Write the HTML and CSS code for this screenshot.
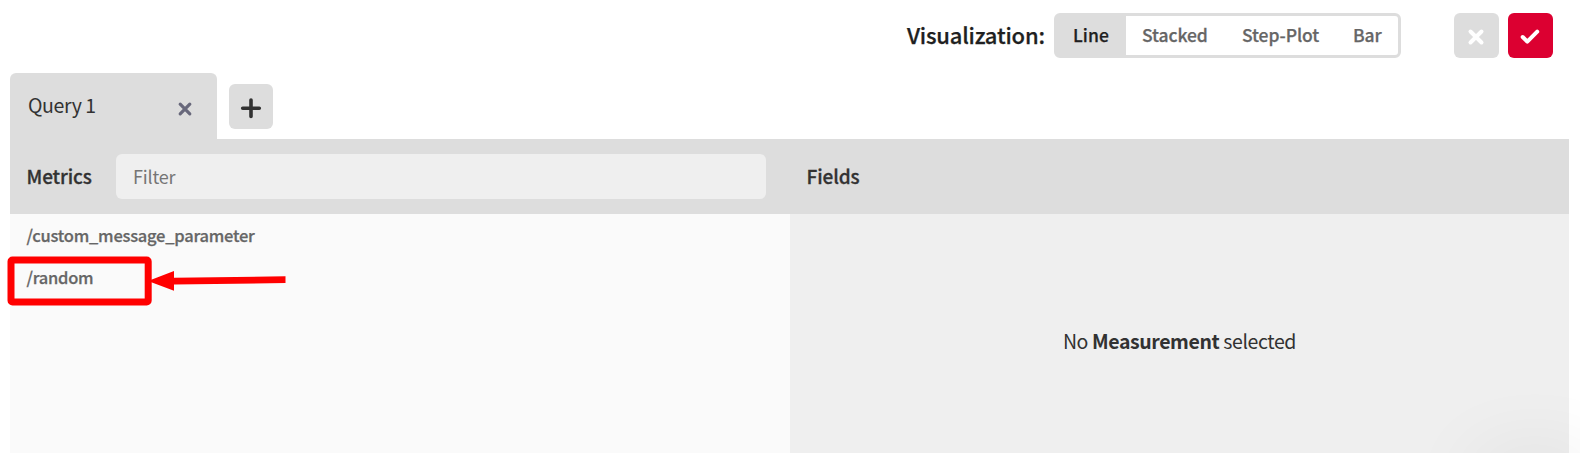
FILE: index.html
```html
<!DOCTYPE html>
<html lang="en">
<head>
<meta charset="utf-8">
<title>Query editor</title>
<link rel="stylesheet" href="styles.css">
</head>
<body>
<div class="editor">
  <header class="toolbar">
    <span class="toolbar-label">Visualization:</span>
    <nav class="segments">
      <span class="segment active t-line">Line</span>
      <span class="segment t-stacked">Stacked</span>
      <span class="segment t-step">Step-Plot</span>
      <span class="segment t-bar">Bar</span>
    </nav>
    <button class="square cancel" aria-label="Cancel"><svg width="45" height="45" viewBox="0 0 45 45"><path d="M16.5 18.5 27.5 29.5M27.5 18.5 16.5 29.5"/></svg></button>
    <button class="square confirm" aria-label="Confirm"><svg width="45" height="45" viewBox="0 0 45 45"><path d="M14.7 24 19.3 28.6 29.2 18.7"/></svg></button>
  </header>
  <div class="tabs">
    <div class="tab"><span class="tab-name">Query 1</span><svg class="tab-close" width="16" height="16" viewBox="0 0 16 16"><path d="M3.2 3.2 12.8 12.8M12.8 3.2 3.2 12.8"/></svg></div>
    <button class="add" aria-label="Add query"><svg width="44" height="45" viewBox="0 0 44 45"><path d="M22 16V32.4M13.7 24.2H30.3"/></svg></button>
  </div>
  <main class="panels">
    <section class="panel metrics">
      <div class="panel-head"><h2>Metrics</h2><input class="filter" type="text" placeholder="Filter" aria-label="Filter"></div>
      <ul class="list">
        <li>/custom_message_parameter</li>
        <li>/random</li>
      </ul>
    </section>
    <section class="panel fields">
      <div class="panel-head"><h2>Fields</h2></div>
      <div class="empty"><p>No <b>Measurement</b> selected</p></div>
    </section>
  </main>
  <div class="corner-shadow"></div>
  <svg class="callout" width="290" height="60" viewBox="0 250 290 60"><rect x="11" y="260" width="137.2" height="42" rx="1.5"/><path d="M148 281 174 271V277.8L285.5 276.3V283L174 284.5V290.7Z"/></svg>
</div>
</body>
</html>
```
FILE: styles.css
```css
* { box-sizing: border-box; }
body {
  margin: 0;
  background: #fff;
  color: #323232;
  font-family: "Noto Sans CJK SC", "Noto Sans", sans-serif;
  font-size: 19.5px;
}
button { border: 0; padding: 0; }
svg { display: block; fill: none; stroke-linecap: round; stroke-linejoin: round; }
.editor { position: relative; width: 1580px; height: 453px; overflow: hidden; white-space: nowrap; }

.toolbar { display: flex; height: 73px; padding: 13px 27px 0 0; justify-content: flex-end; align-items: flex-start; }
.toolbar-label { width: 148px; padding-left: 1px; font-size: 22px; line-height: 43px; letter-spacing: -.2px; font-weight: 500; color: #1f1f21; -webkit-text-stroke: .25px; }
.segments { display: flex; width: 347px; height: 45px; margin-right: 53px; border: 3px solid #ddd; border-radius: 6px; background: #fff; }
.segment { padding-left: 16px; font-size: 17.5px; line-height: 37px; letter-spacing: -.08px; font-weight: 500; color: #666; -webkit-text-stroke: .25px; }
.segment.active { width: 69px; background: #ddd; color: #1f1f21; letter-spacing: .1px; }
.segment.t-stacked { width: 100px; }
.segment.t-step { width: 111px; }
.square { width: 45px; height: 45px; border-radius: 6px; }
.square svg { stroke: #fff; stroke-width: 4; }
.cancel { margin-right: 9px; background: #ddd; }
.confirm { background: #dc0031; }

.tabs { display: flex; height: 66px; padding-left: 10px; }
.tab { display: flex; width: 207px; padding: 0 24px 0 18px; justify-content: space-between; border-radius: 6px 6px 0 0; background: #ddd; }
.tab-name { line-height: 64px; letter-spacing: -.4px; }
.tab-close { margin-top: 28px; stroke: #68687b; stroke-width: 3.2; }
.add { width: 44px; height: 45px; margin: 11px 0 0 12px; border-radius: 6px; background: #ddd; }
.add svg { stroke: #323232; stroke-width: 3.6; }

.panels { display: flex; height: 314px; margin: 0 11px 0 10px; }
.panel { display: flex; flex-direction: column; }
.metrics { width: 780px; background: #fafafa; }
.fields { width: 779px; background: #efefef; }
.panel-head { display: flex; height: 75px; padding: 15px 24px 0 16.5px; background: #ddd; }
.panel-head h2 { width: 89.5px; margin: 0; font-size: 19px; line-height: 43px; letter-spacing: -.1px; font-weight: 500; -webkit-text-stroke: .3px; }
.filter { width: 650px; height: 45px; padding: 0 17px 2px; border: 0; border-radius: 6px; background: #efefef; font: 18px "Noto Sans CJK SC", "Noto Sans", sans-serif; letter-spacing: -.2px; }
.filter::placeholder { color: #757575; opacity: 1; }
.list { margin: 0; padding: 0 16.5px; list-style: none; font-size: 16.5px; line-height: 42px; letter-spacing: -.24px; font-weight: 500; color: #666; -webkit-text-stroke: .25px; }
.empty { display: flex; height: 239px; justify-content: center; padding-top: 112px; }
.empty p { margin: 0; line-height: 30px; letter-spacing: -.4px; }

.corner-shadow { position: absolute; right: -20px; bottom: -60px; width: 130px; height: 60px; border-radius: 30px; box-shadow: 0 0 80px rgba(0, 0, 0, .07); }
.callout { position: absolute; left: 0; top: 250px; }
.callout rect { stroke: #f00; stroke-width: 7; }
.callout path { fill: #f00; }
```
